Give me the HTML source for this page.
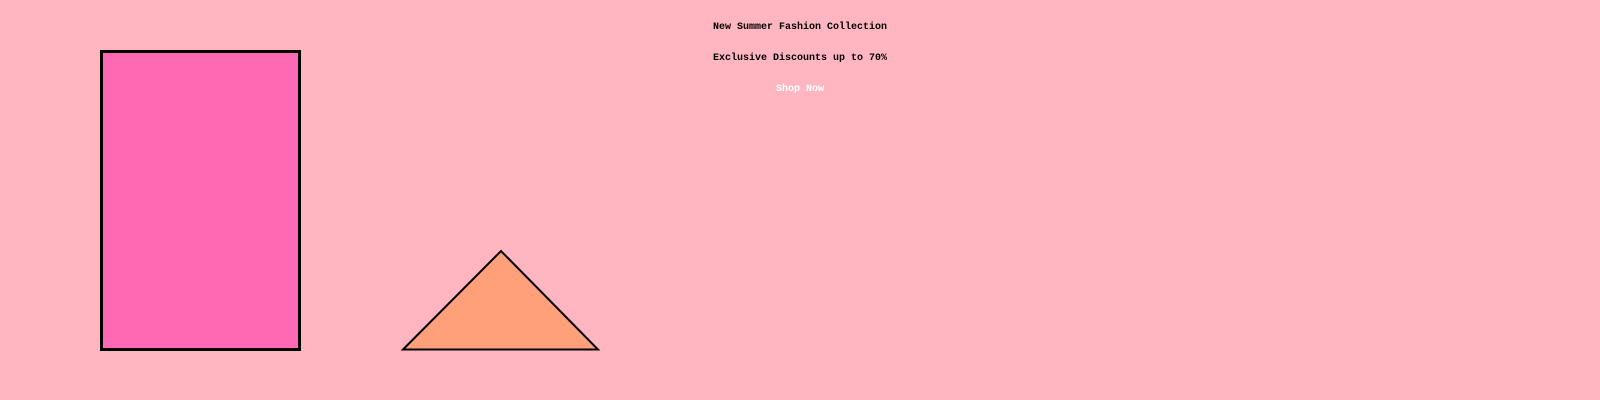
<!DOCTYPE html>
<html><head><meta charset="utf-8"><style>
html,body{margin:0;padding:0;width:1600px;height:400px;background:#ffb6c1;overflow:hidden}
.t{position:absolute;left:0;width:1600px;text-align:center;font-family:"Liberation Mono",monospace;font-weight:bold;font-size:10px;line-height:12px;color:#000}
</style></head><body>
<div class="t" style="top:22px">New Summer Fashion Collection</div>
<div class="t" style="top:53px">Exclusive Discounts up to 70%</div>
<div class="t" style="top:84px;color:#fff">Shop Now</div>
<svg width="1600" height="400" style="position:absolute;left:0;top:0">
<rect x="101.5" y="51.5" width="198" height="298" fill="#ff69b4" stroke="#000" stroke-width="3"/>
<polygon points="403,349.5 501,251 598,349.5" fill="#ffa07a" stroke="#000" stroke-width="2"/>
</svg>
</body></html>
